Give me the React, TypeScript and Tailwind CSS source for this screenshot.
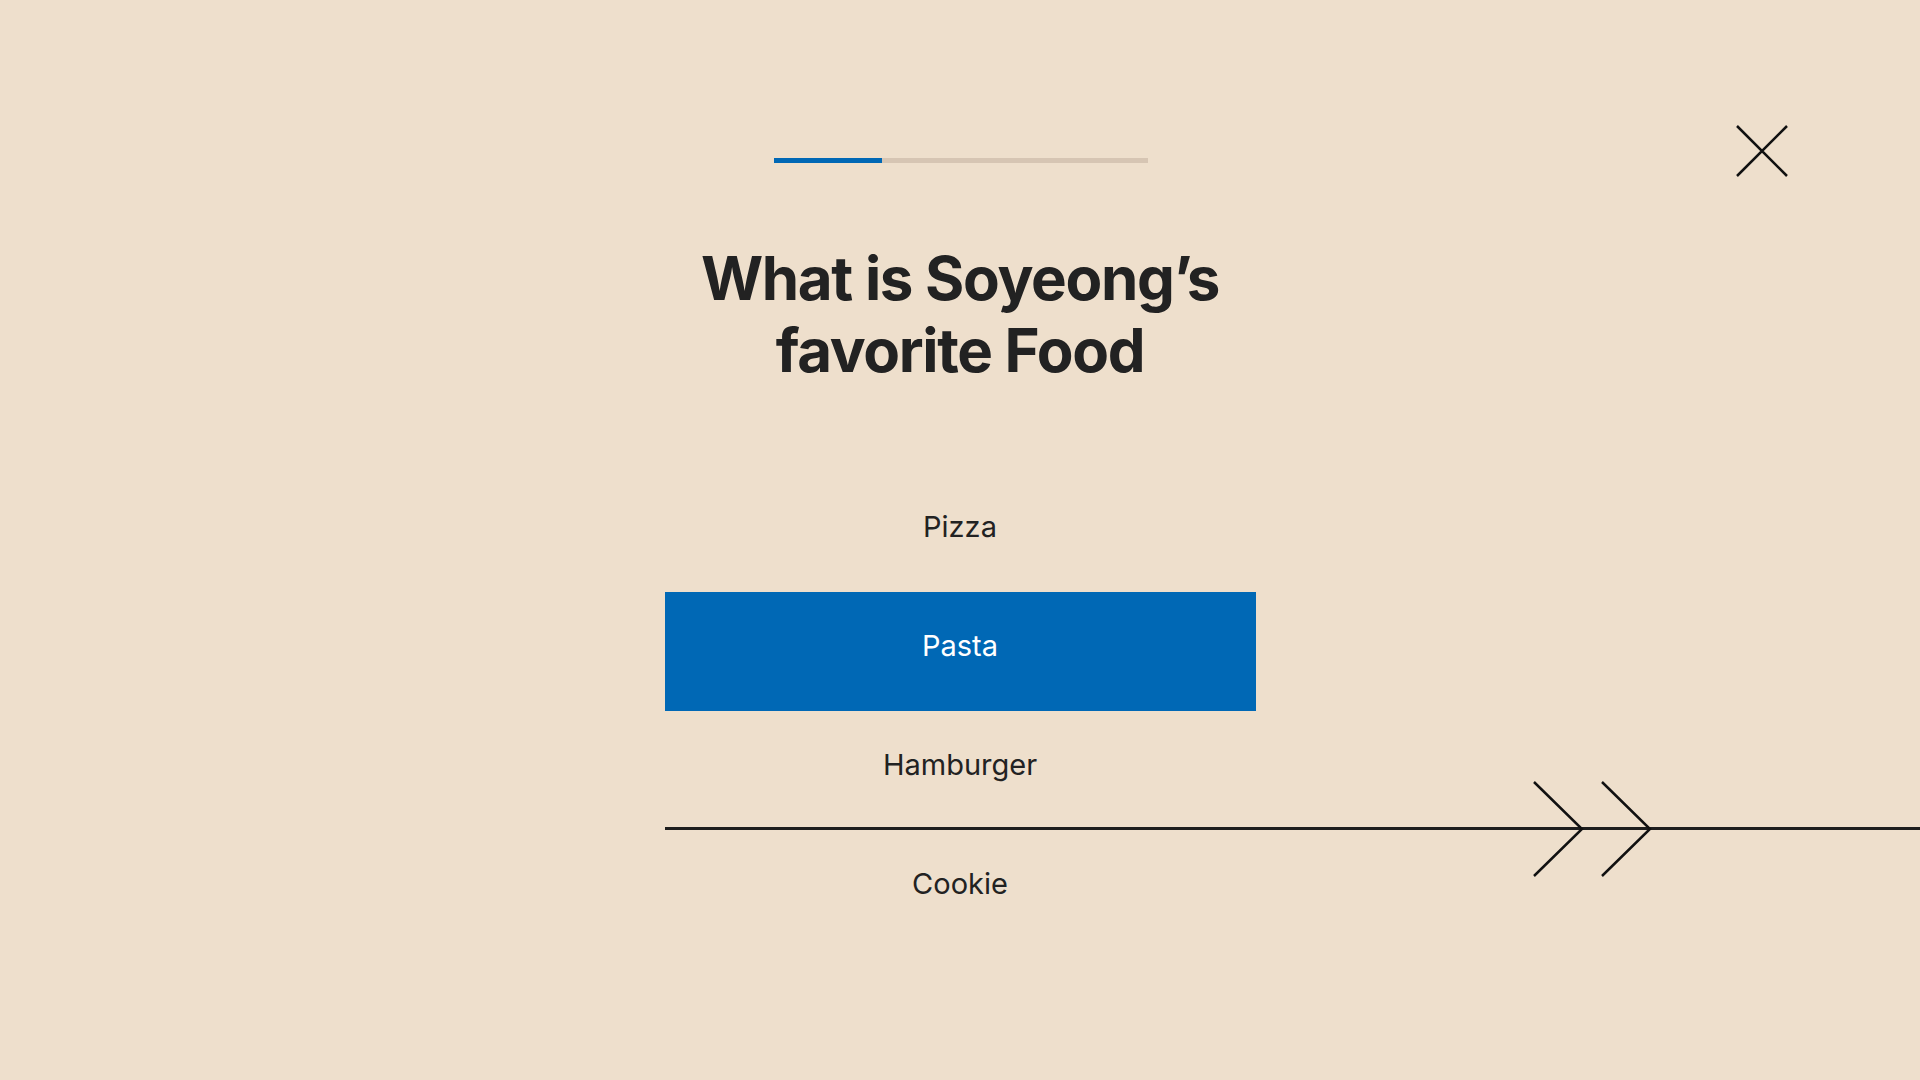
const options = ["Pizza", "Pasta", "Hamburger", "Cookie"];

const App = () => {
  const selected = "Pasta";

  return (
    <div className="relative w-full min-h-screen h-[1080px] overflow-hidden bg-[#eedfcc] font-['Inter',sans-serif] text-[#222222]">
      <button className="absolute top-[124px] right-[131px] w-[54px] h-[54px]">
        <svg width="54" height="54" viewBox="0 0 54 54" fill="none">
          <path d="M2 2 L52 52 M52 2 L2 52" stroke="#111" strokeWidth="2.5" />
        </svg>
      </button>

      <div className="flex flex-col items-center">
        <div className="mt-[158px] ml-[2px] w-[374px] h-[5px] bg-[#d6c5b3] flex">
          <div className="w-[108px] h-full bg-[#0068b5]"></div>
        </div>

        <h1 className="mt-[79px] text-center text-[60px] leading-[72px] font-bold tracking-[-0.022em]">
          What is Soyeong’s
          <br />
          favorite Food
        </h1>

        <div className="mt-[87px] flex flex-col">
          {options.map((opt) => (
            <button
              key={opt}
              className={`w-[591px] h-[119px] flex items-center justify-center pb-[11px] text-[29px] ${
                opt === selected ? "bg-[#0068b5] text-white" : "text-[#222222]"
              }`}
            >
              {opt}
            </button>
          ))}
        </div>
      </div>

      {/* next arrow */}
      <div className="absolute left-[665px] right-0 top-[827px] h-[3px] bg-[#1e1e1e]"></div>
      <svg
        className="absolute left-[1532px] top-[780px]"
        width="122"
        height="98"
        viewBox="0 0 122 98"
        fill="none"
      >
        <path d="M2 2 L50 49 L2 96 M70 2 L118 49 L70 96" stroke="#111" strokeWidth="2.5" />
      </svg>
    </div>
  );
};

export default App;
